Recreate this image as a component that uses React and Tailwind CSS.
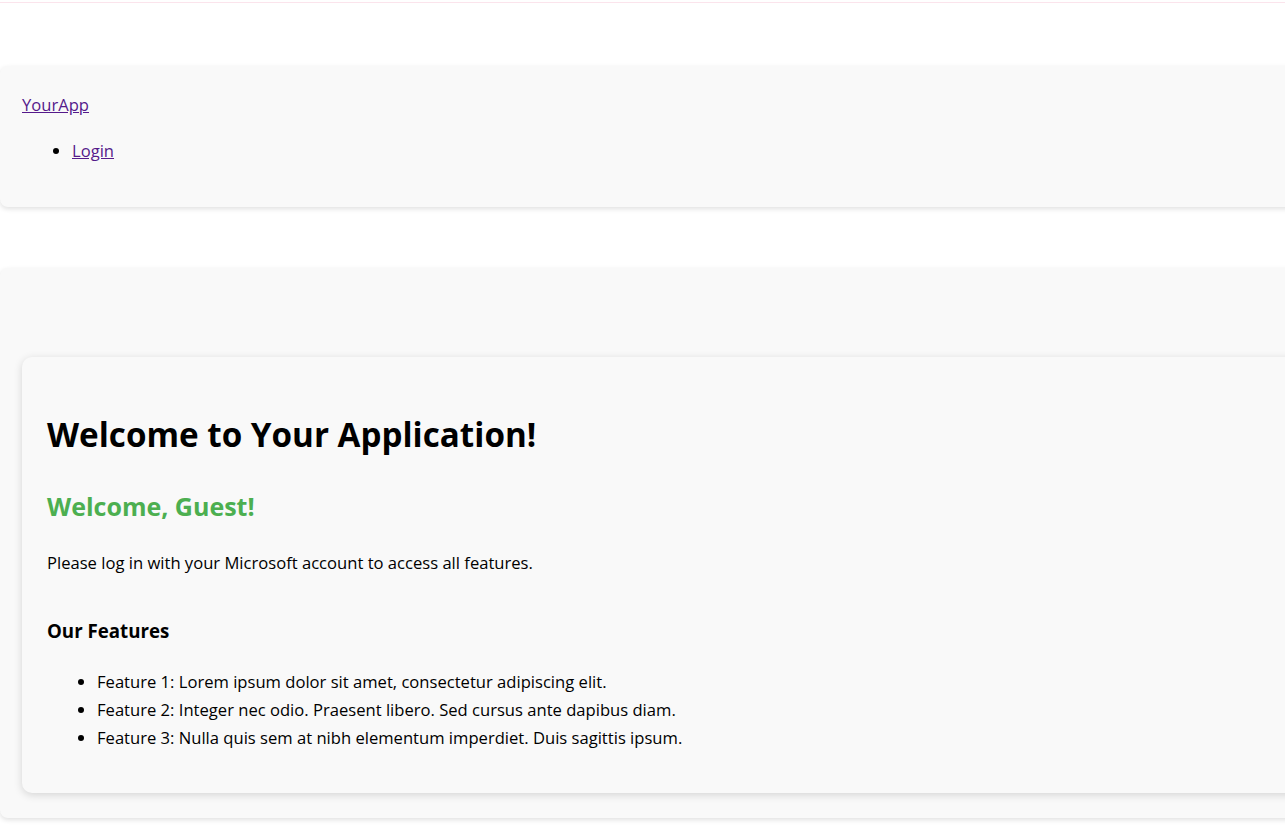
const features = [
  "Feature 1: Lorem ipsum dolor sit amet, consectetur adipiscing elit.",
  "Feature 2: Integer nec odio. Praesent libero. Sed cursus ante dapibus diam.",
  "Feature 3: Nulla quis sem at nibh elementum imperdiet. Duis sagittis ipsum.",
];

export default function App() {
  return (
    <div className="min-h-[838px] bg-white overflow-x-hidden font-['Open_Sans',sans-serif] text-black text-[16.6px] leading-6">
      {/* top rule */}
      <div className="mt-[2px] h-px bg-[#fbe4ec]"></div>

      {/* HEADER */}
      <header className="mt-[63px] w-[calc(100%+20px)] bg-[#f9f9f9] rounded-lg shadow-[0_2px_5px_rgba(0,0,0,0.12)] pl-[22px] pt-[27px] pb-[44px]">
        <a href="#" className="text-[#551a8b] underline">YourApp</a>
        <ul className="mt-[22px] list-disc pl-[50px]">
          <li>
            <a href="#" className="text-[#551a8b] underline">Login</a>
          </li>
        </ul>
      </header>

      {/* MAIN */}
      <main className="mt-[61px] w-[calc(100%+20px)] bg-[#f9f9f9] rounded-lg shadow-[0_2px_5px_rgba(0,0,0,0.12)] pt-[89px] pb-[25px] pl-[22px]">
        <section className="bg-[#f9f9f9] rounded-[10px] shadow-[0_2px_8px_rgba(0,0,0,0.15)] pl-[25px] pt-[59px] pb-[43px]">
          <h1 className="text-[33.2px] font-bold leading-[38px]">Welcome to Your Application!</h1>
          <h2 className="mt-[38px] text-[25px] font-bold leading-7 text-[#4caf50]">Welcome, Guest!</h2>
          <p className="mt-[31px]">Please log in with your Microsoft account to access all features.</p>
          <h3 className="mt-[45px] text-[18.7px] font-bold leading-[22px]">Our Features</h3>
          <ul className="mt-[28px] list-disc pl-[50px]">
            {features.map((f) => (
              <li key={f} className="mb-1 last:mb-0">{f}</li>
            ))}
          </ul>
        </section>
      </main>
    </div>
  );
}
